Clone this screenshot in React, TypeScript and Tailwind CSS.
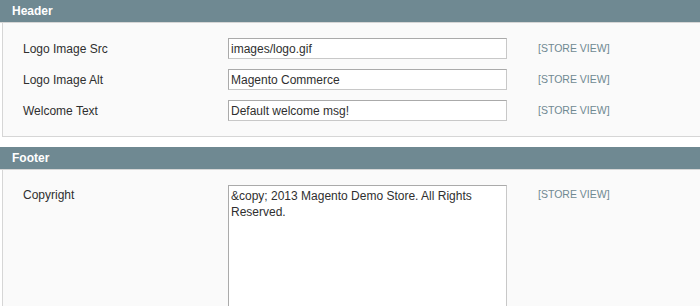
const font = { fontFamily: '"Liberation Sans", Arial, sans-serif' }

interface Field {
  label: string
  value: string
}

const headerFields: Field[] = [
  { label: 'Logo Image Src', value: 'images/logo.gif' },
  { label: 'Logo Image Alt', value: 'Magento Commerce' },
  { label: 'Welcome Text', value: 'Default welcome msg!' },
]

function SectionBar({ title }: { title: string }) {
  return (
    <div className="h-[23px] bg-[#6f8992] border-b border-[#d6d6d6] px-[12px] flex items-center text-[12px] font-bold text-white">
      {title}
    </div>
  )
}

export default function App() {
  return (
    <div className="w-[700px] h-[306px] overflow-hidden bg-white text-[12px] text-[#2f2f2f]" style={font}>
      {/* Header */}
      <SectionBar title="Header" />
      <div className="ml-[2px] bg-[#fafafa] border-l border-b border-[#d6d6d6] pt-[15px] pb-[15px] pl-[20px] flex flex-col gap-[10px]">
        {headerFields.map((f) => (
          <div key={f.label} className="flex items-center h-[21px]">
            <div className="w-[205px]">{f.label}</div>
            <input
              readOnly
              value={f.value}
              className="w-[279px] h-[21px] border border-[#c8c8c8] border-t-[#aaa] border-l-[#aaa] bg-white px-[2px] text-[12px] text-[#2f2f2f] outline-none"
              style={font}
            />
            <div className="ml-[31px] text-[10.5px] text-[#6f8992]">[STORE VIEW]</div>
          </div>
        ))}
      </div>

      {/* Footer */}
      <div className="mt-[10px]">
        <SectionBar title="Footer" />
        <div className="ml-[2px] bg-[#fafafa] border-l border-[#d6d6d6] pt-[15px] pl-[20px] flex items-start">
          <div className="w-[205px] pt-[1px]">Copyright</div>
          <textarea
            readOnly
            value={'&copy; 2013 Magento Demo Store. All Rights Reserved.'}
            className="w-[279px] h-[200px] border border-[#c8c8c8] border-t-[#aaa] border-l-[#aaa] bg-white px-[2px] py-[2px] text-[12px] leading-[16px] text-[#2f2f2f] outline-none resize-none"
            style={font}
          />
          <div className="ml-[31px] pt-[2px] text-[10.5px] text-[#6f8992]">[STORE VIEW]</div>
        </div>
      </div>
    </div>
  )
}
